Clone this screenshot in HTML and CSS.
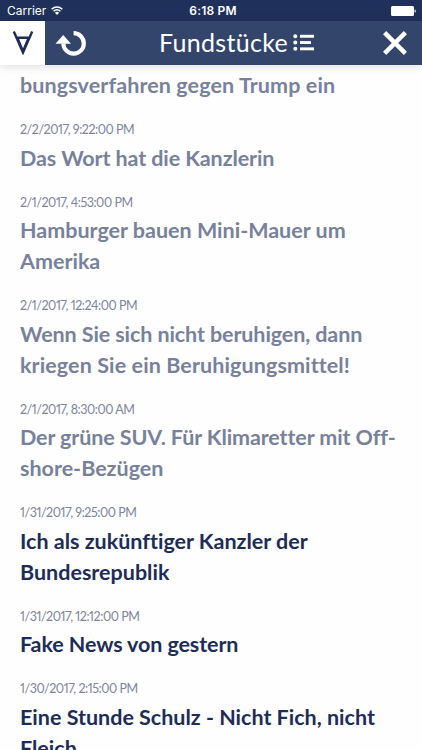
FILE: index.html
```html
<!DOCTYPE html>
<html lang="de">
<head>
    <meta charset="UTF-8">
    <meta name="viewport" content="width=device-width, initial-scale=1.0">
    <title>Fundstücke</title>
    <link rel="stylesheet" href="styles.css">
</head>
<body>
    <div class="app">
        <!-- Status bar -->
        <div class="status-bar">
            <div class="carrier">
                <span>Carrier</span>
                <svg class="wifi" viewBox="0 0 12 9" width="12" height="9">
                    <path d="M0.7 3.2a7.5 7.5 0 0 1 10.6 0M2.6 5.2a4.8 4.8 0 0 1 6.8 0" fill="none" stroke="#fff" stroke-width="1.5"/>
                    <path d="M6 9L3.9 6.8a3 3 0 0 1 4.2 0z" fill="#fff"/>
                </svg>
            </div>
            <div class="clock">6:18 PM</div>
            <svg class="battery" viewBox="0 0 25 10" width="25" height="10">
                <rect x="0" y="0" width="23" height="10" rx="1.5" fill="#fff"/>
                <path d="M23.6 3.2q1.2 .4 1.2 1.8t-1.2 1.8z" fill="#fff"/>
            </svg>
        </div>

        <!-- Header -->
        <header class="header">
            <div class="logo">
                <svg viewBox="0 0 22 24" width="22" height="24">
                    <path d="M1.8 0.6L11 21.5L20.2 0.6M4.5 6.8H17.5" fill="none" stroke="#1d2d58" stroke-width="2.4"/>
                    <path d="M6 8L11 20L16 8" fill="none" stroke="#1d2d58" stroke-width="2"/>
                </svg>
            </div>
            <svg class="reload" viewBox="0 0 32 27" width="32" height="27">
                <path d="M18.6 3.2A10.2 10.2 0 1 1 8.4 13.4" fill="none" stroke="#fff" stroke-width="4.2"/>
                <path d="M0.5 13.8L8.2 5L16 13.8z" fill="#fff"/>
            </svg>
            <h1>Fundstücke</h1>
            <svg class="list-icon" viewBox="0 0 22 17" width="22" height="17">
                <g fill="#fff">
                    <circle cx="2.3" cy="2.2" r="2"/>
                    <circle cx="2.3" cy="8.5" r="2"/>
                    <circle cx="2.3" cy="14.8" r="2"/>
                    <rect x="7" y="0.8" width="14" height="2.9"/>
                    <rect x="7" y="7.1" width="11" height="2.9"/>
                    <rect x="7" y="13.4" width="14" height="2.9"/>
                </g>
            </svg>
            <svg class="close" viewBox="0 0 24 24" width="24" height="24">
                <path d="M1.6 1.6L22.4 22.4M22.4 1.6L1.6 22.4" stroke="#fff" stroke-width="4.4"/>
            </svg>
        </header>

        <!-- Articles -->
        <main class="articles">
            <article class="read">
                <h2 class="wide">bungsverfahren gegen Trump ein</h2>
            </article>
            <article class="read">
                <time>2/2/2017, 9:22:00 PM</time>
                <h2 class="tight">Das Wort hat die Kanzlerin</h2>
            </article>
            <article class="read">
                <time>2/1/2017, 4:53:00 PM</time>
                <h2>Hamburger bauen Mini-Mauer um<br>Amerika</h2>
            </article>
            <article class="read">
                <time>2/1/2017, 12:24:00 PM</time>
                <h2><span class="tight">Wenn Sie sich nicht beruhigen, dann</span><br><span class="wide">kriegen Sie ein Beruhigungsmittel!</span></h2>
            </article>
            <article class="read">
                <time>2/1/2017, 8:30:00 AM</time>
                <h2><span class="tight">Der grüne SUV. Für Klimaretter mit Off-</span><br>shore-Bezügen</h2>
            </article>
            <article>
                <time>1/31/2017, 9:25:00 PM</time>
                <h2>Ich als zukünftiger Kanzler der<br>Bundesrepublik</h2>
            </article>
            <article>
                <time>1/31/2017, 12:12:00 PM</time>
                <h2 class="tight">Fake News von gestern</h2>
            </article>
            <article>
                <time>1/30/2017, 2:15:00 PM</time>
                <h2>Eine Stunde Schulz - Nicht Fich, nicht<br>Fleich</h2>
            </article>
        </main>
    </div>
</body>
</html>
```
FILE: styles.css
```css
* {
    box-sizing: border-box;
}

body {
    margin: 0;
    background-color: #fefefe;
    color: #1d2d58;
    font-family: Lato, sans-serif;
}

.app {
    height: 750px;
    overflow: hidden;
}

/* Status bar */
.status-bar {
    display: grid;
    grid-template-columns: 1fr auto 1fr;
    align-items: center;
    height: 21px;
    padding: 0 6px 0 7px;
    background-color: #1f305a;
    color: #fff;
    font-family: Inter, sans-serif;
    font-size: 12px;
}

.carrier {
    display: flex;
    align-items: center;
    gap: 5px;
}

.clock {
    padding-left: 3px;
    font-weight: 600;
    letter-spacing: 0.2px;
}

.battery {
    justify-self: end;
}

/* Header */
.header {
    display: flex;
    align-items: center;
    height: 44px;
    padding-right: 15px;
    background-color: #34456b;
    color: #fff;
    box-shadow: 0 1px 9px rgba(0, 0, 0, 0.15);
}

.logo {
    display: flex;
    align-items: center;
    justify-content: center;
    width: 45px;
    height: 44px;
    background-color: #fff;
}

.reload {
    margin-left: 10px;
}

h1 {
    width: 134px;
    margin: 0 0 0 72px;
    padding-bottom: 2px;
    font-size: 25px;
    font-weight: 400;
    line-height: 42px;
    letter-spacing: 0.3px;
    white-space: nowrap;
}

.list-icon {
    margin-bottom: 1px;
}

.close {
    margin-left: auto;
}

/* Articles */
.articles {
    padding: 5px 20px 0;
}

article {
    padding-bottom: 20.3px;
}

time {
    display: block;
    height: 18px;
    margin-bottom: 3.7px;
    color: #7c849d;
    font-size: 12.5px;
    font-feature-settings: "pnum";
    line-height: 18px;
    letter-spacing: -0.46px;
}

h2 {
    margin: 0;
    font-size: 21.5px;
    font-weight: 700;
    font-variant-ligatures: none;
    line-height: 30.75px;
    white-space: nowrap;
}

.read h2 {
    color: #78819b;
}

.tight {
    letter-spacing: -0.1px;
}

.wide {
    letter-spacing: 0.1px;
}
```
